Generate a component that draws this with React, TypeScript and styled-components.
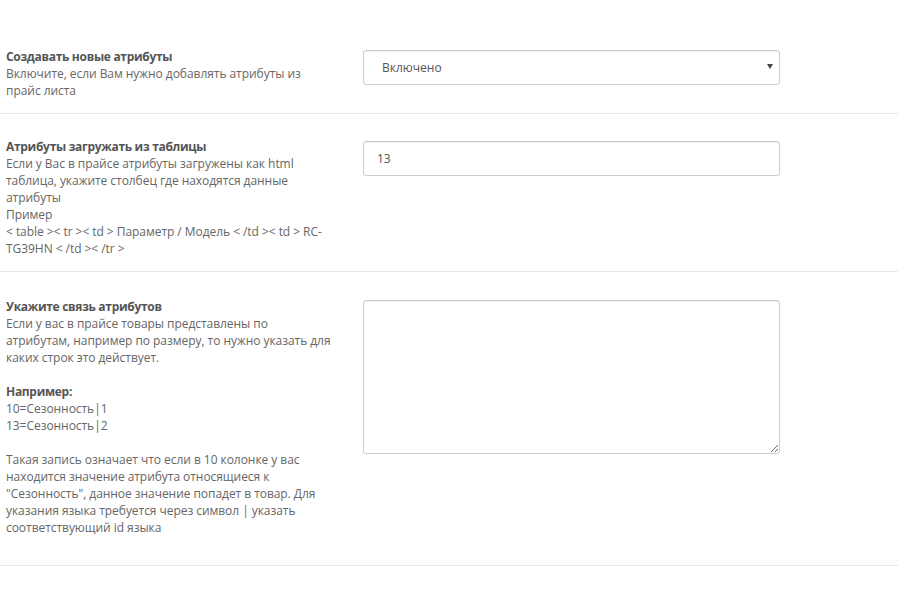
import styled, { createGlobalStyle } from "styled-components";

const Global = createGlobalStyle`
  body {
    margin: 0;
    background: #fff;
    font-family: "Open Sans", "Liberation Sans", sans-serif;
    font-size: 12px;
    line-height: 17px;
    color: #666;
  }
`;

const Form = styled.div`
  width: 898px;
`;

const Row = styled.div<{ $top: number; $bottom: number }>`
  display: grid;
  grid-template-columns: 336px 417px;
  column-gap: 21px;
  align-items: start;
  padding: ${(p) => p.$top}px 0 ${(p) => p.$bottom}px 6px;
  border-bottom: 1px solid #e9e9e9;
`;

const Label = styled.div`
  color: #666;
  white-space: nowrap;
  letter-spacing: -0.05px;

  b {
    display: block;
    font-weight: 700;
    letter-spacing: -0.3px;
    color: #555;
  }
  .gap {
    height: 17px;
  }
`;

const Control = styled.div<{ $offset: number }>`
  margin-top: ${(p) => p.$offset}px;
  position: relative;
`;

const Field = styled.div`
  box-sizing: border-box;
  height: 35px;
  border: 1px solid #ccc;
  border-radius: 3px;
  box-shadow: inset 0 1px 1px rgba(0, 0, 0, 0.075);
  display: flex;
  align-items: center;
  color: #555;
  font-size: 12px;
`;

const SelectBox = styled(Field)`
  padding-left: 18px;
`;

const InputBox = styled(Field)`
  padding-left: 13px;
`;

const Arrow = styled.span`
  position: absolute;
  right: 7px;
  top: 14px;
  width: 0;
  height: 0;
  border-left: 3px solid transparent;
  border-right: 3px solid transparent;
  border-top: 5px solid #444;
`;

const Area = styled.textarea`
  box-sizing: border-box;
  display: block;
  width: 417px;
  height: 154px;
  margin: 0;
  border: 1px solid #ccc;
  border-radius: 3px;
  box-shadow: inset 0 1px 1px rgba(0, 0, 0, 0.075);
  font-family: inherit;
  font-size: 12px;
  outline: none;
`;

export default function App() {
  return (
    <Form>
      <Global />
      <Row $top={48} $bottom={14}>
        <Label>
          <b>Создавать новые атрибуты</b>
          Включите, если Вам нужно добавлять атрибуты из
          <br />
          прайс листа
        </Label>
        <Control $offset={2}>
          <SelectBox>Включено</SelectBox>
          <Arrow />
        </Control>
      </Row>
      <Row $top={24} $bottom={14}>
        <Label>
          <b>Атрибуты загружать из таблицы</b>
          Если у Вас в прайсе атрибуты загружены как html
          <br />
          таблица, укажите столбец где находятся данные
          <br />
          атрибуты
          <br />
          Пример
          <br />
          {"< table >< tr >< td > Параметр / Модель < /td >< td > RC-"}
          <br />
          {"TG39HN < /td >< /tr >"}
        </Label>
        <Control $offset={3}>
          <InputBox>13</InputBox>
        </Control>
      </Row>
      <Row $top={26} $bottom={29}>
        <Label>
          <b>Укажите связь атрибутов</b>
          Если у вас в прайсе товары представлены по
          <br />
          атрибутам, например по размеру, то нужно указать для
          <br />
          каких строк это действует.
          <div className="gap" />
          <b>Например:</b>
          10=Сезонность|1
          <br />
          13=Сезонность|2
          <div className="gap" />
          Такая запись означает что если в 10 колонке у вас
          <br />
          находится значение атрибута относящиеся к
          <br />
          "Сезонность", данное значение попадет в товар. Для
          <br />
          указания языка требуется через символ | указать
          <br />
          соответствующий id языка
        </Label>
        <Control $offset={2}>
          <Area />
        </Control>
      </Row>
    </Form>
  );
}
